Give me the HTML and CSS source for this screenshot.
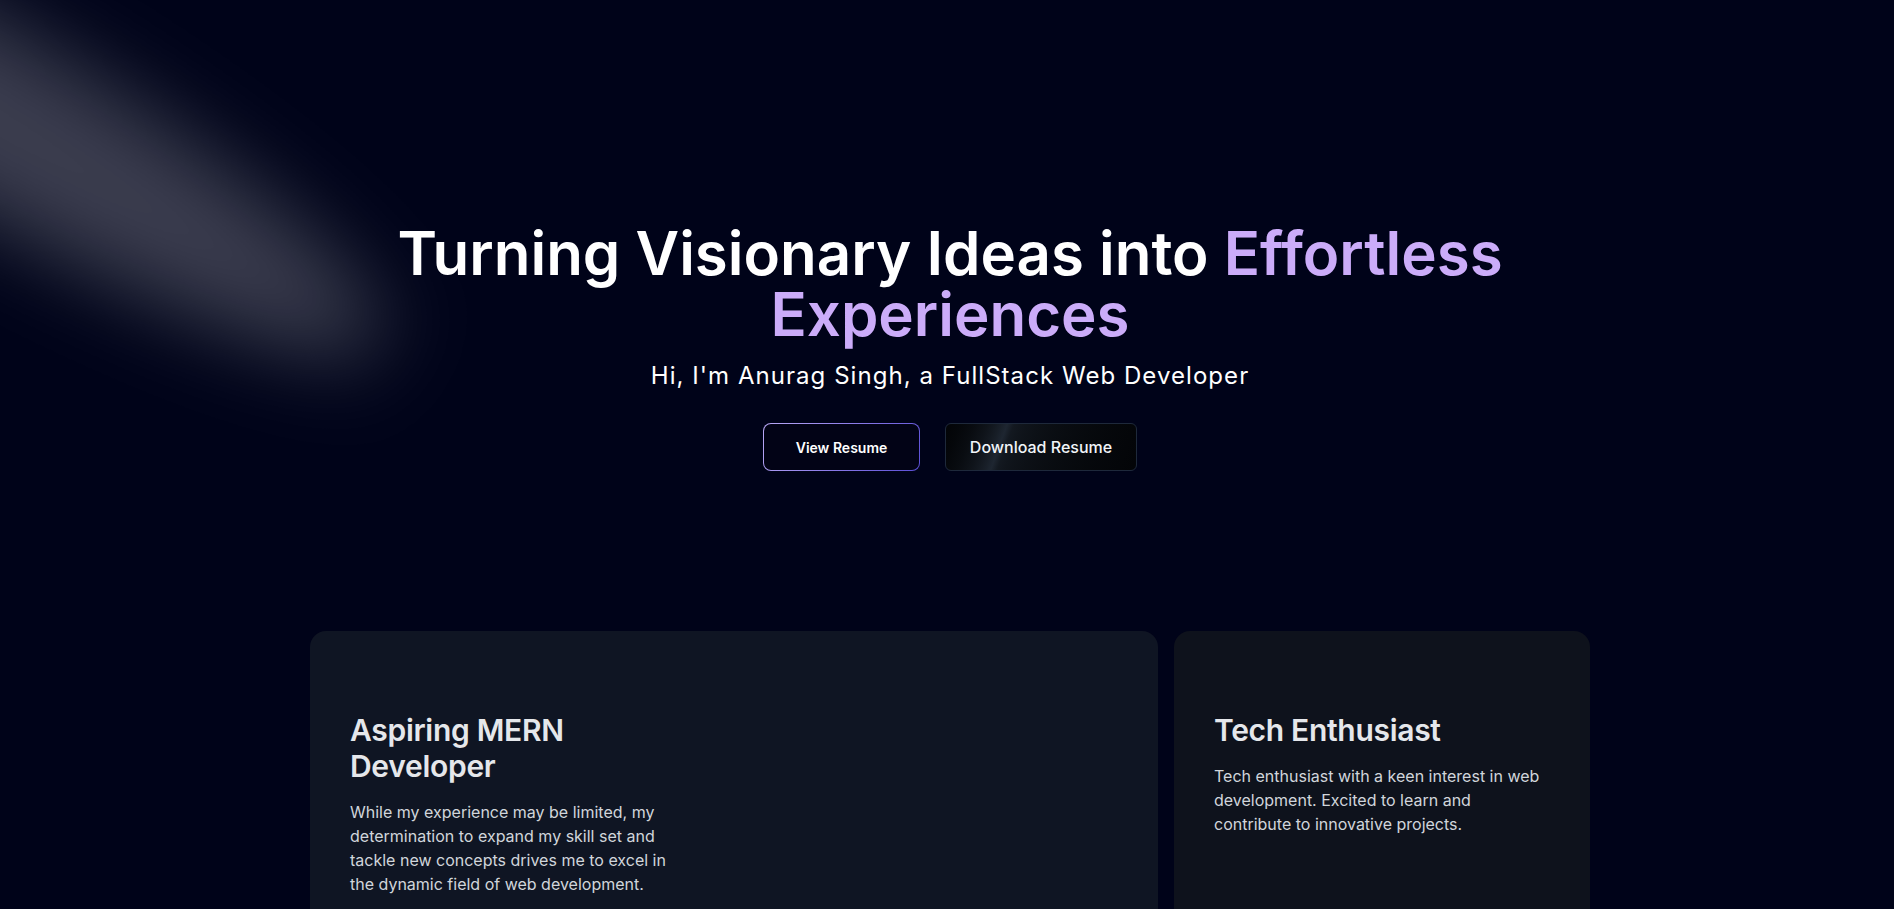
FILE: index.html
```html
<!DOCTYPE html>
<html lang="en">
<head>
<meta charset="utf-8">
<title>Anurag Singh</title>
<link rel="stylesheet" href="styles.css">
</head>
<body>
<main class="page">
  <section class="hero">
    <div class="spotlight"></div>
    <div class="hero-inner">
      <h1 class="hero-title">Turning Visionary Ideas into <span class="accent">Effortless Experiences</span></h1>
      <p class="hero-sub">Hi, I'm Anurag Singh, a FullStack Web Developer</p>
      <div class="hero-actions">
        <a class="btn btn-outline" href="#">View Resume</a>
        <a class="btn btn-shimmer" href="#">Download Resume</a>
      </div>
    </div>
  </section>
  <section class="bento">
    <article class="card card-wide">
      <h2 class="card-title">Aspiring MERN Developer</h2>
      <p class="card-text">While my experience may be limited, my determination to expand my skill set and tackle new concepts drives me to excel in the dynamic field of web development.</p>
    </article>
    <article class="card card-narrow">
      <h2 class="card-title">Tech Enthusiast</h2>
      <p class="card-text">Tech enthusiast with a keen interest in web development. Excited to learn and contribute to innovative projects.</p>
    </article>
  </section>
</main>
</body>
</html>
```
FILE: styles.css
```css
* { box-sizing: border-box; }
html, body {
  margin: 0;
  padding: 0;
  background: #000319;
  overflow: hidden;
}
body {
  font-family: Inter, "Noto Sans", "Liberation Sans", sans-serif;
  color: #fff;
}
.page {
  padding-left: 6px;
  min-height: 909px;
}
.hero {
  position: relative;
  padding-top: 223px;
}
.spotlight {
  position: absolute;
  left: -556px;
  top: 5px;
  width: 1000px;
  height: 180px;
  border-radius: 50%;
  background: rgba(255, 255, 255, 0.23);
  filter: blur(42px);
  transform: rotate(30deg);
  pointer-events: none;
}
.hero-inner {
  position: relative;
  display: flex;
  flex-direction: column;
  align-items: center;
}
.hero-title {
  margin: 0;
  max-width: 1160px;
  font-size: 60px;
  line-height: 61px;
  font-weight: 600;
  letter-spacing: 0;
  text-align: center;
  color: #fff;
}
.accent { color: #cbacf9; }
.hero-sub {
  margin: 15px 0 0;
  font-size: 24px;
  line-height: 32px;
  letter-spacing: 1.05px;
  color: #fff;
}
.hero-actions {
  display: flex;
  gap: 25px;
  margin-top: 31px;
}
.btn {
  display: inline-flex;
  align-items: center;
  justify-content: center;
  height: 48px;
  text-decoration: none;
}
.btn-outline {
  width: 157px;
  border-radius: 8px;
  border: 1px solid transparent;
  background:
    linear-gradient(#020316, #020316) padding-box,
    linear-gradient(120deg, #b9a9f5 0%, #8b7be8 50%, #5b4fd6 100%) border-box;
  color: #fff;
  font-size: 14px;
  font-weight: 600;
}
.btn-shimmer {
  width: 192px;
  border-radius: 6px;
  border: 1px solid #1e293b;
  background: linear-gradient(110deg, #000103, 45%, #1e2631, 55%, #000103) -137px 0 / 200% 100%;
  color: #f1f5f9;
  font-size: 16px;
  font-weight: 500;
}
.bento {
  display: grid;
  grid-template-columns: 848px 416px;
  gap: 16px;
  width: 1280px;
  margin: 160px auto 0;
}
.card {
  height: 320px;
  border-radius: 16px;
  padding: 81px 40px 40px;
}
.card-wide { background: #0f1523; }
.card-narrow { background: #0e121c; }
.card-title {
  margin: 0 0 16px;
  font-size: 30px;
  line-height: 36px;
  font-weight: 600;
  letter-spacing: -0.01em;
  color: #e5e7eb;
}
.card-text {
  margin: 0;
  font-size: 16px;
  line-height: 24px;
  color: #d1d5db;
}
.card-wide .card-title,
.card-wide .card-text { max-width: 332px; }
```
